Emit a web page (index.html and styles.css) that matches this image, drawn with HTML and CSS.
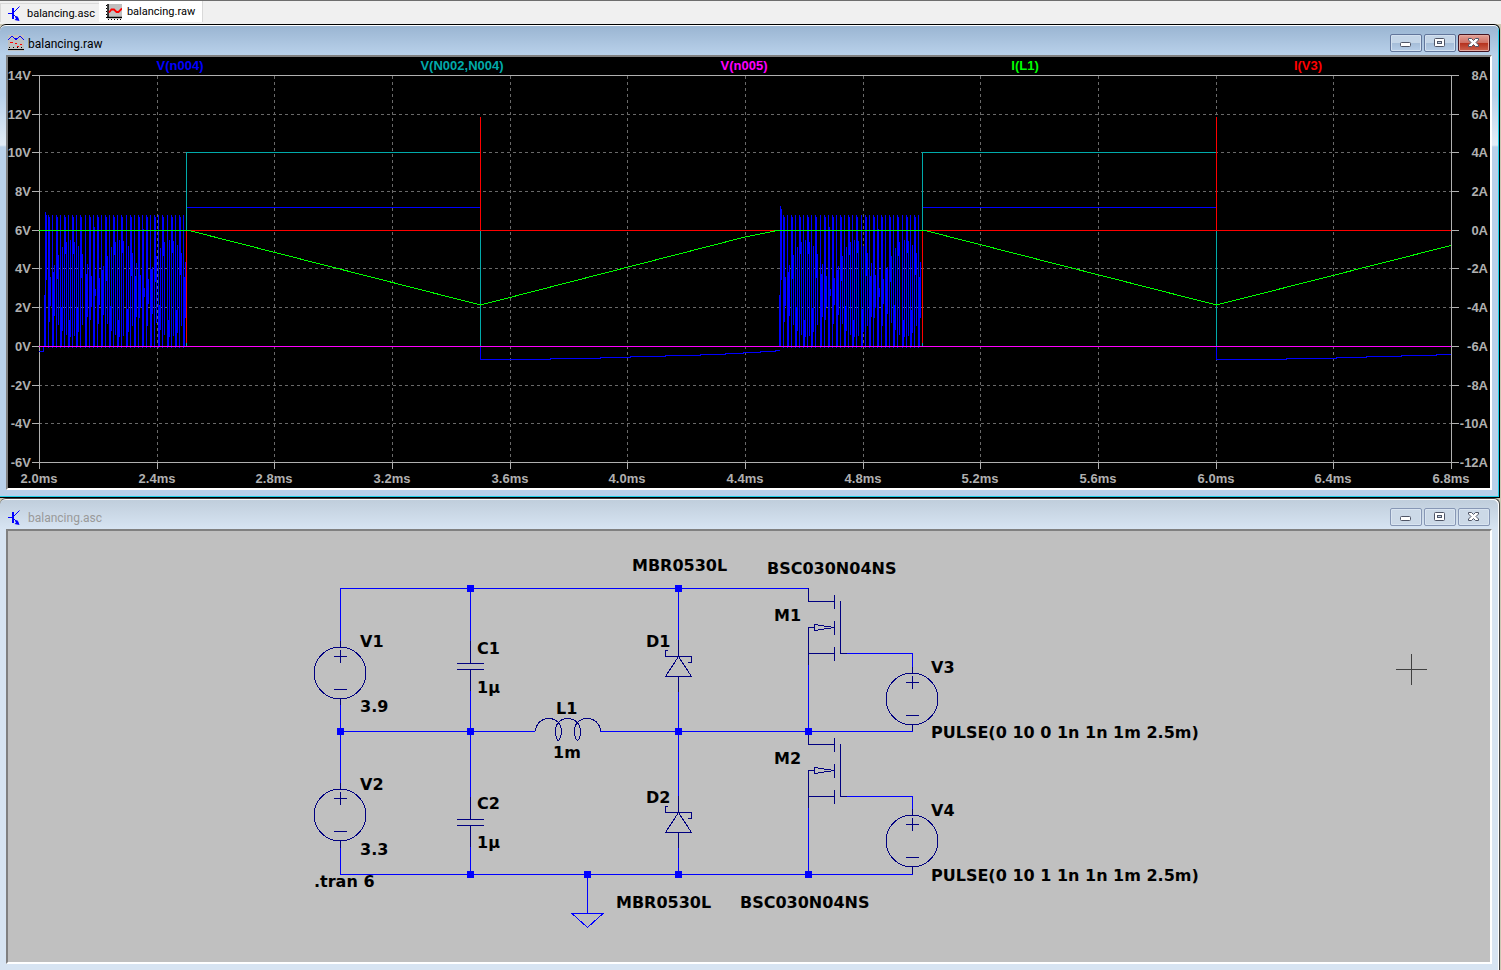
FILE: index.html
```html
<!DOCTYPE html>
<html lang="en">
<head>
  <meta charset="UTF-8">
  <meta name="viewport" content="width=device-width, initial-scale=1.0">
  <title>balancing.raw</title>
  <link rel="stylesheet" href="styles.css">
</head>
<body>

  <!-- shared icons and schematic symbols -->
  <svg class="defs" width="0" height="0" aria-hidden="true">
    <symbol id="icon-asc" viewBox="0 0 16 16">
      <path d="M0 8.500H5M6 7L11.500 1.500M6 10L9 13" fill="none" stroke="#00f"/>
      <path d="M4 3H6V14H4Z" fill="#00f"/>
      <path d="M11.500 16L6.500 15L8 13.500L7 12L9 11L10.500 13Z" fill="#00f"/>
    </symbol>
    <symbol id="icon-raw" viewBox="0 0 16 16">
      <path d="M2 0H16V14H2Z" fill="#c0c0c0"/>
      <path d="M2 0V14M1 13.500H16" stroke="#000" stroke-width="1.500" fill="none"/>
      <path d="M.5 1V14M2 15.500H16" stroke="#000" stroke-dasharray="1 2" fill="none"/>
      <path d="M3 8.500L5.500 5.500H8L10.500 8H12.500L16 4.500" stroke="#f00" stroke-width="1.800" fill="none"/>
    </symbol>
    <symbol id="icon-plot" viewBox="0 0 16 16">
      <path d="M0 0H16V16H0Z" fill="#c0c0c0"/>
      <path d="M0 5L4 1L8 4.500L12 1L16 5" stroke="#00f" fill="none"/>
      <path d="M2 7.500H5M7 8.500H9M12 9.500H14M9 11.500H11" stroke="#f00" fill="none"/>
      <path d="M0 14.500H16" stroke="#000"/>
      <path d="M1 12.500H15" stroke="#000" stroke-dasharray="1 3"/>
    </symbol>
    <symbol id="icon-min" viewBox="0 0 12 12">
      <rect x=".5" y="5.5" width="10" height="4" rx="1" fill="#fff" stroke="#4f5566"/>
    </symbol>
    <symbol id="icon-max" viewBox="0 0 12 12">
      <rect x=".5" y="1.5" width="10" height="8" rx="1" fill="#fff" stroke="#4f5566"/>
      <rect x="3.5" y="4.5" width="4" height="2" fill="#c4d4e6" stroke="#4f5566"/>
    </symbol>
    <symbol id="icon-close" viewBox="0 0 12 12">
      <path d="M.5 1.500H3.500L5.500 3.500L7.500 1.500H10.500V3L8 5.500L10.500 8V9.500H7.500L5.500 7.500L3.500 9.500H.5V8L3 5.500L.5 3Z" fill="#fff" stroke="#4f5566"/>
    </symbol>

    <g id="source">
      <circle cx="0" cy="0" r="26"/>
      <path d="M-6 -16.500H7M.5 -23V-10M-6 16.500H7"/>
    </g>
    <g id="capacitor">
      <path d="M.5 -25V-3M-13 -2.500H14M-13 3.500H14M.5 4V25"/>
    </g>
    <g id="diode">
      <path d="M.5 -26V-10M.5 10V26M-10 -15.500H-12.500V-9.500H13.500V-3.500H10M.5 -9.500L-12.500 10.500H13.500Z"/>
    </g>
    <g id="mosfet">
      <path d="M.5 0V13.500H26M26.500 7V21M26.500 33V47M26.500 59V73M32.500 13V65.500H39M6 39.500H.5V77M0 65.500H26"/>
      <path d="M6.500 36.500L26 39.500L6.500 42.500Z"/>
    </g>
  </svg>

  <nav class="tabs">
    <button type="button" class="tab">
      <svg class="icon"><use href="#icon-asc"/></svg>balancing.asc
    </button>
    <button type="button" class="tab tab-active">
      <svg class="icon"><use href="#icon-raw"/></svg>balancing.raw
    </button>
  </nav>

  <main>
    <section class="window">
      <header class="titlebar">
        <svg class="icon crisp"><use href="#icon-plot"/></svg>
        <h2>balancing.raw</h2>
        <div class="controls">
          <button type="button" aria-label="Minimize"><svg><use href="#icon-min"/></svg></button>
          <button type="button" aria-label="Maximize"><svg><use href="#icon-max"/></svg></button>
          <button type="button" class="close" aria-label="Close"><svg><use href="#icon-close"/></svg></button>
        </div>
      </header>
      <div class="client plot">
        <svg viewBox="8 57 1482 431">
          <g id="grid" class="grid"></g>
          <g id="axes" class="axes"></g>
          <g class="trace blue">
            <path d="M39 351.500H43.500V347"/>
            <path d="M187 207.500H480.500M480.500 346V359.500H550V358.500H600V357.500H630V356.500H665V355.500H700V354.500H725V353.500H743V352.500H760V351.500H775V350.500H779.500"/>
            <path d="M923 207.500H1216.500M1216.500 346V359.500H1286V358.500H1336V357.500H1366V356.500H1401V355.500H1436V354.500H1451"/>
            <path id="burst"/>
          </g>
          <path class="trace magenta" d="M39 346.500H1451"/>
          <path class="trace teal" d="M186.500 346V152.500H480.500V346M922.500 346V152.500H1216.500V346"/>
          <path class="trace red" d="M39 230.500H1451M186.500 231V343M922.500 231V343M480.500 117V231M1216.500 117V231"/>
          <path class="trace green" d="M39 230.500H189L480.500 305L745 237L777 230.500H925L1216.500 305L1451 245.500"/>
          <g class="legend">
            <text class="blue" x="180" y="70">V(n004)</text>
            <text class="teal" x="462" y="70">V(N002,N004)</text>
            <text class="magenta" x="744" y="70">V(n005)</text>
            <text class="green" x="1025" y="70">I(L1)</text>
            <text class="red" x="1308" y="70">I(V3)</text>
          </g>
          <g id="labels" class="labels"></g>
        </svg>
      </div>
    </section>

    <section class="window window-inactive">
      <header class="titlebar">
        <svg class="icon"><use href="#icon-asc"/></svg>
        <h2>balancing.asc</h2>
        <div class="controls">
          <button type="button" aria-label="Minimize"><svg><use href="#icon-min"/></svg></button>
          <button type="button" aria-label="Maximize"><svg><use href="#icon-max"/></svg></button>
          <button type="button" aria-label="Close"><svg><use href="#icon-close"/></svg></button>
        </div>
      </header>
      <div class="client schematic">
        <svg viewBox="8 531 1482 431">
          <g class="wires">
            <path d="M340.500 647V588.500H808M340.500 698V790M340.500 841V874.500H912.500V867"/>
            <path d="M340 731.500H535M600 731.500H912.500V724M470.500 588V663M470.500 669V820M470.500 825V874"/>
            <path d="M678.500 588V656M678.500 677V812M678.500 833V874M808.500 660V731M808.500 800V874"/>
            <path d="M846 653.500H912.500V673M846 796.500H912.500V815"/>
            <path d="M587.500 874V913M572 913.500H603L587.500 927.500Z"/>
          </g>
          <g class="parts">
            <path d="M340.500 641V647M340.500 698V705M340.500 783V790M340.500 841V848M912.500 667V673M912.500 724V731M912.500 809V815M912.500 867V874"/>
            <use href="#source" x="340" y="673"/>
            <use href="#source" x="340" y="815"/>
            <use href="#source" x="912" y="699"/>
            <use href="#source" x="912" y="841"/>
            <use href="#capacitor" x="470" y="666"/>
            <use href="#capacitor" x="470" y="822"/>
            <use href="#diode" x="678" y="666"/>
            <use href="#diode" x="678" y="822"/>
            <use href="#mosfet" x="808" y="588"/>
            <use href="#mosfet" x="808" y="731"/>
            <path d="M535.500 731.500C536 723 542 718.500 549 718.500C556 718.500 561.500 724 561.500 731C561.500 736 559 740.500 558 740.500C557 740.500 555.500 736 555.500 731C555.500 723 561 718.500 567.500 718.500C575 718.500 580.500 724 580.500 731C580.500 736 579 740.500 577.500 740.500C576 740.500 574.500 736 574.500 731C574.500 723 580 718.500 587 718.500C594 718.500 600 723 600.500 731.500"/>
          </g>
          <path class="nodes" d="M467 585h7v7h-7zM675 585h7v7h-7zM337 728h7v7h-7zM467 728h7v7h-7zM675 728h7v7h-7zM805 728h7v7h-7zM467 871h7v7h-7zM584 871h7v7h-7zM675 871h7v7h-7zM805 871h7v7h-7z"/>
          <path class="cursor" d="M1396 669.500H1427M1411.500 654V685"/>
          <g class="names">
            <text x="632" y="571">MBR0530L</text>
            <text x="767" y="574">BSC030N04NS</text>
            <text x="360" y="647">V1</text>
            <text x="360" y="712">3.9</text>
            <text x="477" y="654">C1</text>
            <text x="477" y="693">1µ</text>
            <text x="556" y="714">L1</text>
            <text x="553" y="758">1m</text>
            <text x="646" y="647">D1</text>
            <text x="774" y="621">M1</text>
            <text x="931" y="673">V3</text>
            <text x="931" y="738">PULSE(0 10 0 1n 1n 1m 2.5m)</text>
            <text x="360" y="790">V2</text>
            <text x="360" y="855">3.3</text>
            <text x="477" y="809">C2</text>
            <text x="477" y="848">1µ</text>
            <text x="314" y="887">.tran 6</text>
            <text x="646" y="803">D2</text>
            <text x="774" y="764">M2</text>
            <text x="931" y="816">V4</text>
            <text x="931" y="881">PULSE(0 10 1 1n 1n 1m 2.5m)</text>
            <text x="616" y="908">MBR0530L</text>
            <text x="740" y="908">BSC030N04NS</text>
          </g>
        </svg>
      </div>
    </section>
  </main>

  <script src="script.js"></script>
</body>
</html>
```
FILE: styles.css
```css
* {
  box-sizing: border-box;
}
body {
  margin: 0;
  background-color: #f0f0f0;
  font-family: Roboto, "Noto Sans", sans-serif;
  font-size: 12px;
  color: #000;
}
.defs {
  position: absolute;
}
.icon {
  width: 16px;
  height: 16px;
  flex: none;
}
.crisp {
  shape-rendering: crispEdges;
}

/* document tabs */
.tabs {
  display: flex;
  align-items: flex-end;
  height: 24px;
  padding-bottom: 2px;
  border-top: 1px solid #6d6d6d;
}
.tab {
  display: flex;
  align-items: center;
  gap: 3px;
  height: 19px;
  padding: 0 4px 0 7px;
  border: 1px solid #d9d9d9;
  border-width: 1px 0 0 1px;
  background-color: #f0f0f0;
  font-family: inherit;
  font-size: 11px;
  color: #000;
}
.tab-active {
  gap: 5px;
  height: 21px;
  padding: 0 7px;
  border-width: 0 1px 0 0;
  background-color: #fff;
}

/* child windows */
main {
  padding-right: 1px;
  background-color: #cdc8b4;
}
.window {
  padding: 0 7px 7px 6px;
  border: solid #000;
  border-width: 1px 1px 1px 0;
  border-radius: 6px 6px 0 0;
  background: linear-gradient(#99b4d1, #b9d1ea 30px, #b9d1ea 70px, #e3edf7 120px, #b9d1ea 122px);
  box-shadow: inset 0 1px #fff, inset -1px -1px #1fd0e8;
}
.window-inactive {
  padding-bottom: 6px;
  border-color: #444;
  border-bottom: 0;
  background: linear-gradient(#bfcddb, #d7e4f2 30px);
  box-shadow: inset -1px 1px #fff;
}
.titlebar {
  display: flex;
  align-items: center;
  gap: 4px;
  height: 30px;
  padding: 8px 0 2px 2px;
}
.titlebar h2 {
  flex: 1;
  margin: 0;
  padding-top: 2px;
  font-size: 12px;
  line-height: 18px;
  font-weight: normal;
}
.window-inactive h2 {
  color: #999;
}
.controls {
  display: flex;
  gap: 2px;
  padding-right: 2px;
}
.controls button {
  display: flex;
  align-items: center;
  justify-content: center;
  width: 32px;
  height: 18px;
  padding: 0;
  border: 1px solid #62769b;
  border-radius: 2px;
  background: linear-gradient(#c5d6e8 50%, #a5bdd8 50%, #b7cee8);
  box-shadow: inset 0 0 0 1px #d3e1f0;
}
.controls svg {
  width: 12px;
  height: 12px;
}
.controls .close {
  border-color: #431422;
  background: linear-gradient(#e2a198, #cf6e61 50%, #b5301c 50%, #cc6350);
  box-shadow: inset 0 0 0 1px #e5a99f;
}
.window-inactive .controls button {
  border-color: #8797b5;
  background: #ccd9e7;
  box-shadow: inset 0 0 0 1px #d9e4f0;
}
.client {
  border: 2px solid;
  border-color: #808080 #fff #fff #808080;
}
.client svg {
  display: block;
  width: 100%;
  height: auto;
  shape-rendering: crispEdges;
}

/* waveform plot */
.plot {
  background-color: #000;
}
.plot text {
  font-family: "Liberation Sans", Arial, sans-serif;
  font-size: 13px;
  font-weight: bold;
  fill: #b0b0b0;
}
.plot .trace,
.grid,
.axes {
  fill: none;
  stroke: #b0b0b0;
}
.grid {
  stroke: #696969;
  stroke-dasharray: 3 3;
}
.legend text {
  text-anchor: middle;
}
.plot .blue.trace { stroke: #00f; }
.plot .teal.trace { stroke: #00aaaa; }
.plot .magenta.trace { stroke: #f0f; }
.plot .green.trace { stroke: #0f0; }
.plot .red.trace { stroke: #f00; }
.legend .blue { fill: #00f; }
.legend .teal { fill: #00aaaa; }
.legend .magenta { fill: #f0f; }
.legend .green { fill: #0f0; }
.legend .red { fill: #f00; }
.labels .left,
.labels .right {
  text-anchor: end;
}
.labels .bottom {
  text-anchor: middle;
}

/* schematic */
.schematic {
  background-color: #c0c0c0;
}
.wires {
  fill: none;
  stroke: #00f;
}
.parts {
  fill: none;
  stroke: #000080;
}
.nodes {
  fill: #00f;
}
.cursor {
  fill: none;
  stroke: #404040;
}
.names text {
  font-family: "DejaVu Sans", sans-serif;
  font-size: 16px;
  font-weight: bold;
  fill: #000;
}
```
FILE: script.js
```js
const LEFT = 39;
const RIGHT = 1451;
const TOP = 75;
const BOTTOM = 462;

let grid = '';
let axes = `M${LEFT + 0.5} ${TOP}V${BOTTOM}M${RIGHT + 0.5} ${TOP}V${BOTTOM}`;
let labels = '';

// voltage on the left, current on the right
for (let i = 0; i <= 10; i++) {
  const y = Math.floor(TOP + (BOTTOM - TOP) * i / 10 + 0.4);
  if (i > 0 && i < 10) {
    grid += `M${LEFT} ${y + 0.5}H${RIGHT}`;
    axes += `M32 ${y + 0.5}H${LEFT}M${RIGHT} ${y + 0.5}H1459`;
  } else {
    axes += `M32 ${y + 0.5}H1459`;
  }
  labels += `<text class="left" x="31" y="${y + 5}">${14 - 2 * i}V</text>`;
  labels += `<text class="right" x="1488" y="${y + 5}">${8 - 2 * i}A</text>`;
}

// time
for (let i = 0; i <= 12; i++) {
  const x = Math.floor(LEFT + (RIGHT - LEFT) * i / 12 + 0.4);
  if (i > 0 && i < 12) {
    grid += `M${x + 0.5} ${TOP + 1}V${BOTTOM}`;
  }
  axes += `M${x + 0.5} ${BOTTOM}V469`;
  labels += `<text class="bottom" x="${x}" y="483">${(2 + 0.4 * i).toFixed(1)}ms</text>`;
}

// ringing of V(n004): one tall bar, a partial one beside it and a line between bars
function ringing(start, end, peak) {
  let d = `M${start + 0.5} 295V347M${start + 1.5} ${peak}V347M${start + 2.5} ${peak + 3}V280`;
  for (let k = 1; start + 4.1 * k < end - 1; k++) {
    const x = Math.floor(start + 4.1 * k) + 0.5;
    const wave = Math.abs(Math.sin(k * 0.26));
    d += `M${x} 215V348`;
    if (k % 2) {
      d += `M${x + 1} 217V${Math.round(346 - 95 * wave)}`;
    } else {
      d += `M${x + 1} ${Math.round(225 + 95 * wave)}V347`;
    }
    if (x + 2 < end) {
      d += `M${x + 2} ${Math.round(290 - 50 * wave)}V${Math.round(295 + 42 * wave)}`;
    }
  }
  return d;
}

document.getElementById('grid').innerHTML = `<path d="${grid}"/>`;
document.getElementById('axes').innerHTML = `<path d="${axes}"/>`;
document.getElementById('labels').innerHTML = labels;
document.getElementById('burst').setAttribute('d', ringing(44, 187, 212) + ringing(779, 922, 206));
```
